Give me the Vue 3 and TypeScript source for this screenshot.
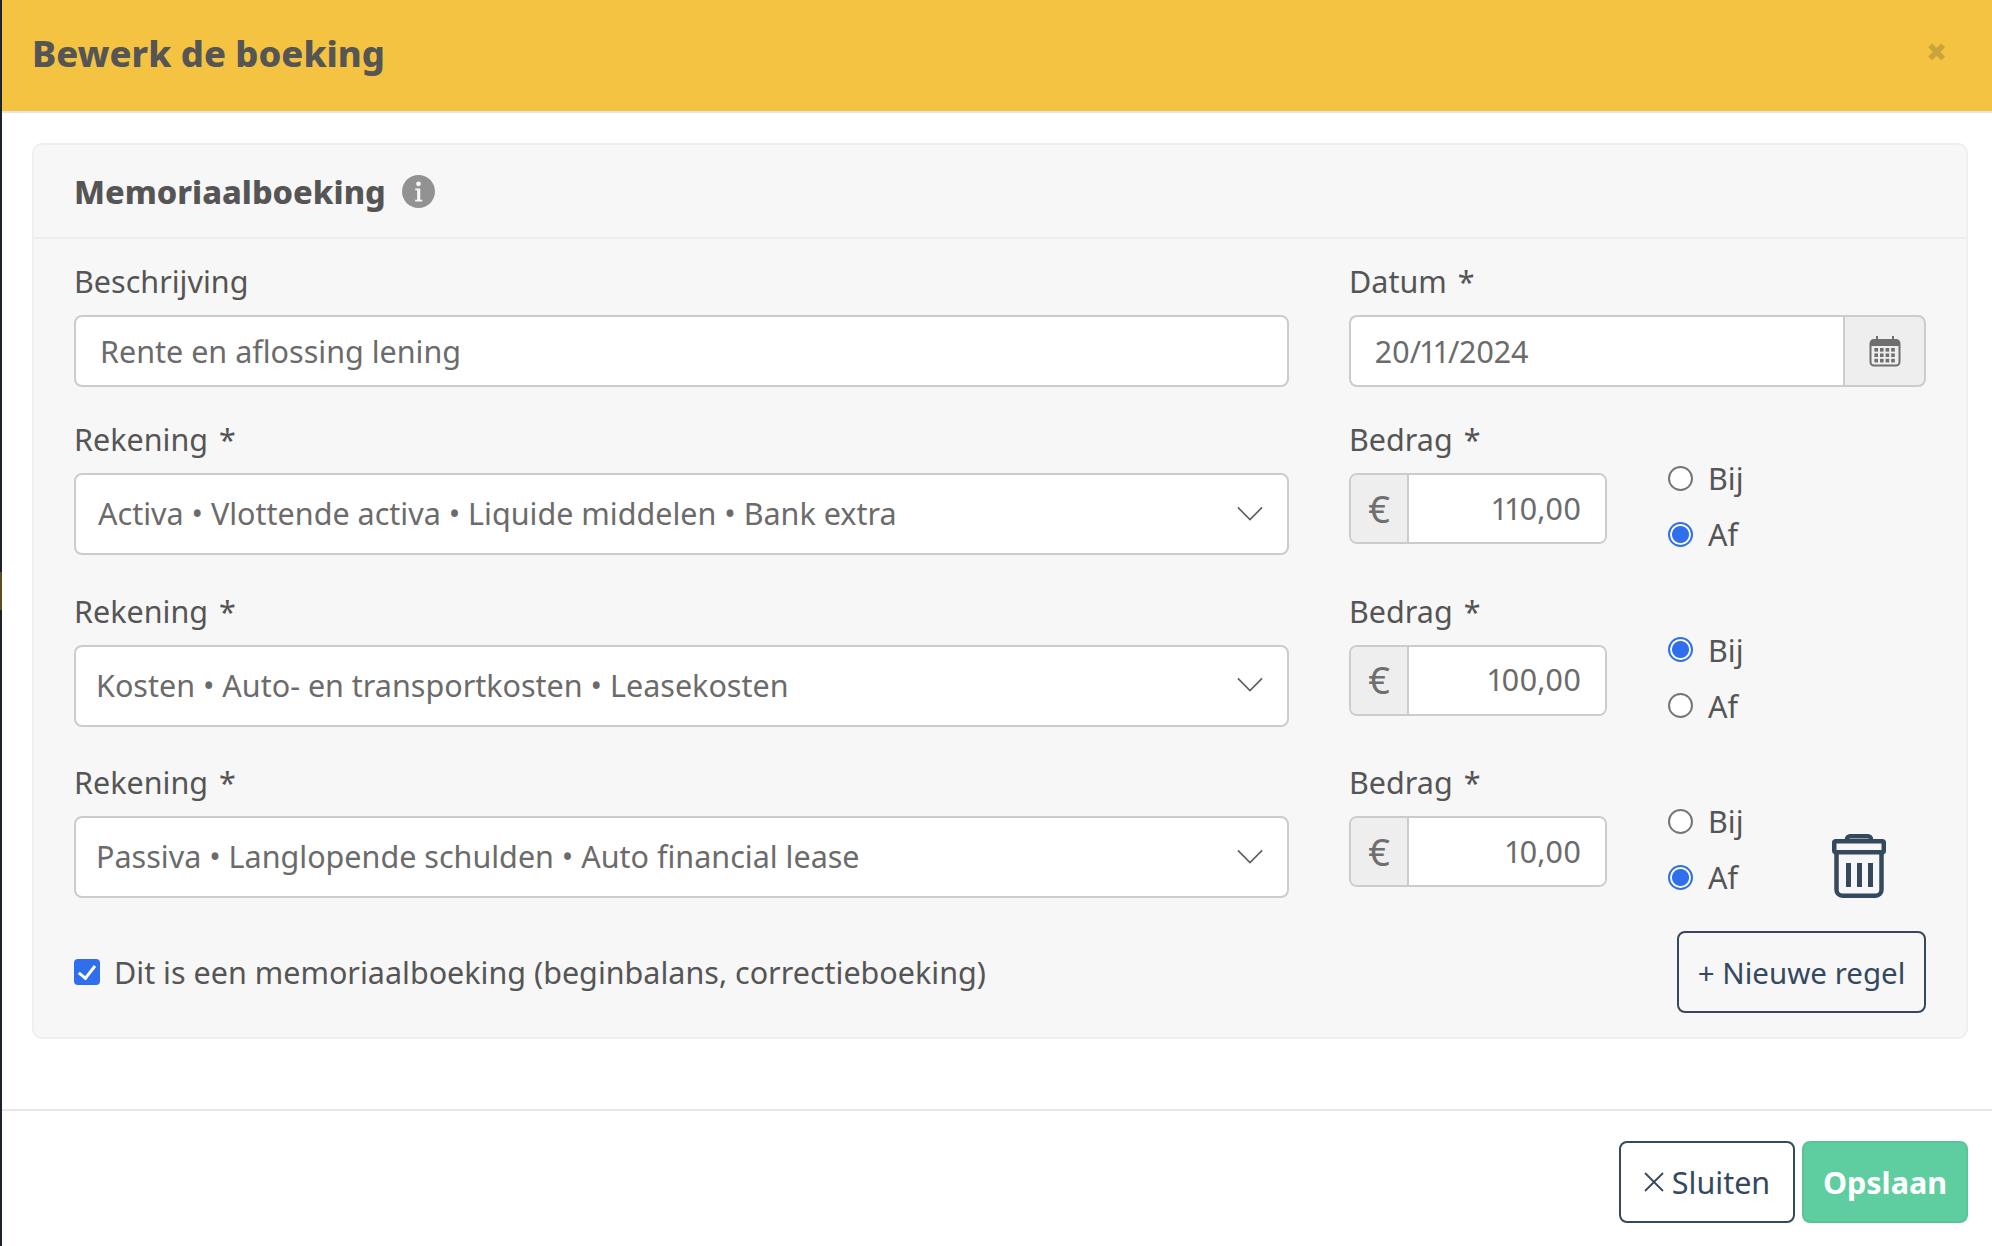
<template>
  <div class="page">
    <span class="edge-mark"></span>
    <header class="modal-head">
      <h1>Bewerk de boeking</h1>
      <span class="close-x">&#10006;</span>
    </header>

    <section class="card">
      <div class="card-head">
        <h2>Memoriaalboeking</h2>
        <svg class="info" viewBox="0 0 32 32">
          <circle cx="16" cy="16" r="16" fill="#929292" />
          <circle cx="16" cy="8.6" r="2.3" fill="#f7f7f7" />
          <path d="M12.8 13h4.9v11h2v1.8h-7v-1.8h2v-9.2h-1.9z" fill="#f7f7f7" />
        </svg>
      </div>

      <div class="card-body">
        <div class="row first">
          <div>
            <label>Beschrijving</label>
            <input class="text-input" type="text" value="Rente en aflossing lening" />
          </div>
          <div>
            <label>Datum<span class="req">*</span></label>
            <div class="date-group">
              <input class="text-input" type="text" value="20/11/2024" />
              <span class="date-btn">
                <svg viewBox="0 0 32 32" width="32" height="32">
                  <path d="M7 1h2v5H7zM23 1h2v5h-2z" fill="#6f6f6f" />
                  <rect x="1.500" y="5" width="29" height="25.500" rx="3.500" fill="none" stroke="#6f6f6f" stroke-width="2" />
                  <path d="M2 6.500a2 2 0 0 1 2-2h24a2 2 0 0 1 2 2V11H2z" fill="#6f6f6f" />
                  <g fill="#6f6f6f">
                    <rect v-for="c in calendarCells" :key="c.k" :x="c.x" :y="c.y" width="3.600" height="3.600" />
                  </g>
                </svg>
              </span>
            </div>
          </div>
        </div>

        <div v-for="(line, i) in lines" :key="i" class="row">
          <div>
            <label>Rekening<span class="req">*</span></label>
            <div class="select-box">
              <span>{{ line.account }}</span>
              <svg viewBox="0 0 28 16" width="26" height="15">
                <path d="M1 1.500l13 13 13-13" fill="none" stroke="#5f5f5f" stroke-width="1.800" />
              </svg>
            </div>
          </div>
          <div class="amount-cell">
            <div class="amount">
              <label>Bedrag<span class="req">*</span></label>
              <div class="amount-group">
                <span class="euro">€</span>
                <input class="amount-input" type="text" :value="line.amount" />
              </div>
            </div>
            <div class="radios">
              <label class="radio">
                <input type="radio" :name="'side' + i" :checked="line.side === 'bij'" />
                <span>Bij</span>
              </label>
              <label class="radio">
                <input type="radio" :name="'side' + i" :checked="line.side === 'af'" />
                <span>Af</span>
              </label>
            </div>
            <svg v-if="line.removable" class="trash" viewBox="0 0 54 64" width="54" height="64">
              <g fill="none" stroke="#34495e" stroke-width="4.500" stroke-linejoin="round">
                <path d="M15 7V5.250a3 3 0 0 1 3-3h18a3 3 0 0 1 3 3V7" />
                <rect x="2.250" y="7.250" width="49.500" height="11" rx="1.500" />
                <path d="M4.500 18v37.750a6 6 0 0 0 6 6h33a6 6 0 0 0 6-6V18" />
              </g>
              <path d="M14 29h5v24h-5zM25 29h5v24h-5zM36 29h5v24h-5z" fill="#34495e" />
            </svg>
          </div>
        </div>

        <div class="bottom-row">
          <label class="check">
            <input type="checkbox" checked />
            <span>Dit is een memoriaalboeking (beginbalans, correctieboeking)</span>
          </label>
          <button type="button" class="btn btn-outline new-line">+ Nieuwe regel</button>
        </div>
      </div>
    </section>

    <footer class="modal-foot">
      <button type="button" class="btn btn-outline close-btn">
        <svg viewBox="0 0 20 20" width="20" height="20">
          <path d="M1 1l18 18M19 1L1 19" fill="none" stroke="#34495e" stroke-width="1.800" />
        </svg>
        Sluiten
      </button>
      <button type="button" class="btn btn-save">Opslaan</button>
    </footer>
  </div>
</template>

<script setup lang="ts">
interface BookingLine {
  account: string
  amount: string
  side: 'bij' | 'af'
  removable?: boolean
}

const lines: BookingLine[] = [
  { account: 'Activa • Vlottende activa • Liquide middelen • Bank extra', amount: '110,00', side: 'af' },
  { account: 'Kosten • Auto- en transportkosten • Leasekosten', amount: '100,00', side: 'bij' },
  { account: 'Passiva • Langlopende schulden • Auto financial lease', amount: '10,00', side: 'af', removable: true }
]

// raster van vakjes in het kalendericoon
const calendarCells: { k: string; x: number; y: number }[] = []
for (let r = 0; r < 3; r++) {
  for (let c = 0; c < 4; c++) {
    calendarCells.push({ k: `${r}-${c}`, x: 5.4 + c * 5.6, y: 13 + r * 5.4 })
  }
}
</script>

<style>
html,
body {
  margin: 0;
  background: #fff;
}
</style>

<style scoped>
.page {
  position: relative;
  box-sizing: border-box;
  min-height: 1246px;
  border-left: 2px solid #1c222a;
  background: #fff;
  color: #555;
  font-family: 'Noto Sans', 'Open Sans', sans-serif;
  font-size: 30.5px;
  font-variant-numeric: proportional-nums;
}

/* olijfkleurig streepje op de linkerrand */
.edge-mark {
  position: absolute;
  left: -2px;
  top: 572px;
  width: 2px;
  height: 38px;
  background: #5b4d1f;
}

.modal-head {
  display: flex;
  align-items: center;
  justify-content: space-between;
  box-sizing: content-box;
  height: 105px;
  padding: 0 45px 6px 30px;
  background: #f4c342;
  border-bottom: 2px solid #e6e6e6;
}

.modal-head h1 {
  margin: 0;
  font-size: 36.3px;
  font-weight: 800;
  color: #555;
}

.close-x {
  color: #c9a43c;
  font-family: 'DejaVu Sans', sans-serif;
  font-size: 25px;
}

.card {
  box-sizing: border-box;
  width: 1936px;
  margin: 30px 0 0 30px;
  background: #f7f7f7;
  border: 2px solid #efefef;
  border-radius: 10px;
}

.card-head {
  display: flex;
  align-items: center;
  gap: 16px;
  height: 94px;
  padding: 0 40px;
  border-bottom: 2px solid #eee;
  box-sizing: border-box;
}

.card-head h2 {
  margin: 0;
  font-size: 32.5px;
  font-weight: 800;
  color: #555;
}

.info {
  width: 33px;
  height: 33px;
}

.card-body {
  padding: 25px 40px 24px 40px;
}

.row {
  display: grid;
  grid-template-columns: 1215px 577px;
  column-gap: 60px;
  margin-bottom: 31.5px;
}

.row.first {
  margin-bottom: 35px;
}

label {
  display: block;
  height: 36px;
  margin-bottom: 15px;
  line-height: 34px;
}

.req {
  margin-left: 11px;
}

.text-input {
  box-sizing: border-box;
  display: block;
  width: 100%;
  height: 72px;
  padding: 0 24px;
  background: #fff;
  border: 2px solid #ccc;
  border-radius: 8px;
  color: #6b6b6b;
  font: inherit;
  outline: none;
}

.date-group {
  display: flex;
}

.date-group .text-input {
  border-radius: 8px 0 0 8px;
  border-right: 0;
}

.date-btn {
  box-sizing: border-box;
  flex: 0 0 83px;
  display: flex;
  align-items: center;
  justify-content: center;
  height: 72px;
  background: #eee;
  border: 2px solid #ccc;
  border-radius: 0 8px 8px 0;
}

.select-box {
  box-sizing: border-box;
  display: flex;
  align-items: center;
  justify-content: space-between;
  height: 82px;
  padding: 0 24px 2px 20px;
  background: #fff;
  border: 2px solid #ccc;
  border-radius: 8px;
  color: #6b6b6b;
}

.row:nth-child(2) .select-box {
  padding-left: 22px;
}

.amount-cell {
  display: flex;
  align-items: flex-start;
}

.amount {
  width: 258px;
}

.amount-group {
  box-sizing: border-box;
  display: flex;
  height: 71px;
  border: 2px solid #ccc;
  border-radius: 8px;
  overflow: hidden;
  background: #fff;
}

.euro {
  flex: 0 0 58px;
  display: flex;
  align-items: center;
  justify-content: center;
  padding-bottom: 2px;
  box-sizing: border-box;
  background: #eee;
  border-right: 2px solid #ccc;
  color: #6f6f6f;
  font-size: 38px;
}

.amount-input {
  box-sizing: border-box;
  flex: 1;
  min-width: 0;
  padding: 0 24px 2px 0;
  border: 0;
  background: #fff;
  color: #6b6b6b;
  font: inherit;
  text-align: right;
  outline: none;
}

.radios {
  margin: 28px 0 0 61px;
  width: 164px;
}

.radio {
  display: flex;
  align-items: center;
  gap: 15px;
  height: 56px;
  margin: 0;
  line-height: 56px;
}

.radio input {
  appearance: none;
  box-sizing: border-box;
  width: 25px;
  height: 25px;
  margin: 0;
  background: #fff;
  border: 2px solid #767676;
  border-radius: 50%;
}

.radio input:checked {
  border-color: #2f6fed;
  background: radial-gradient(circle, #2f6fed 0 8px, #fff 9px);
}

.trash {
  margin-top: 69px;
}

.bottom-row {
  display: flex;
  align-items: center;
  justify-content: space-between;
  margin-top: -5.5px;
}

.check {
  display: flex;
  align-items: center;
  gap: 14px;
  margin: 0;
  height: auto;
}

.check input {
  appearance: none;
  box-sizing: border-box;
  position: relative;
  width: 26px;
  height: 26px;
  margin: 0;
  background: #2f6fed;
  border-radius: 4px;
}

.check input::after {
  content: '';
  position: absolute;
  left: 8px;
  top: 3px;
  width: 7px;
  height: 14px;
  border: solid #fff;
  border-width: 0 3.5px 3.5px 0;
  transform: rotate(38deg);
}

.btn {
  box-sizing: border-box;
  height: 82px;
  border-radius: 8px;
  font: inherit;
  cursor: pointer;
}

.btn-outline {
  display: inline-flex;
  align-items: center;
  justify-content: center;
  gap: 8px;
  padding: 0;
  background: transparent;
  border: 2px solid #34495e;
  color: #34495e;
}

.new-line {
  width: 249px;
  font-size: 29.5px;
}

.modal-foot {
  display: flex;
  justify-content: flex-end;
  gap: 7px;
  margin-top: 70px;
  padding: 30px 24px 0 0;
  border-top: 2px solid #e6e6e6;
}

.close-btn {
  width: 176px;
  background: #fff;
}

.btn-save {
  width: 166px;
  padding: 0;
  background: #5ecd9f;
  border: 2px solid #59c497;
  color: #fff;
  font-weight: 700;
}
</style>
